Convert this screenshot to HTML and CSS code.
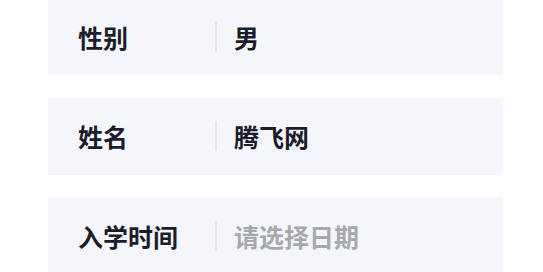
FILE: index.html
```html
<!DOCTYPE html>
<html lang="zh">
<head>
<meta charset="utf-8">
<link rel="stylesheet" href="styles.css">
</head>
<body>
<div class="form">
  <div class="row">
    <div class="label">性别</div>
    <div class="divider"></div>
    <div class="value">男</div>
  </div>
  <div class="row">
    <div class="label">姓名</div>
    <div class="divider"></div>
    <div class="value">腾飞网</div>
  </div>
  <div class="row">
    <div class="label">入学时间</div>
    <div class="divider"></div>
    <div class="value placeholder">请选择日期</div>
  </div>
</div>
</body>
</html>
```
FILE: styles.css
```css
html, body {
  margin: 0;
  padding: 0;
  background: #ffffff;
}
body {
  font-family: "Noto Sans CJK SC", "Noto Sans", sans-serif;
  overflow: hidden;
  height: 272px;
}
.form {
  display: flex;
  flex-direction: column;
  gap: 22.5px;
  width: 455px;
  margin: -2px 0 0 48px;
}
.row {
  display: flex;
  align-items: center;
  height: 77px;
  background: #f5f6fb;
  padding-left: 30px;
  box-sizing: border-box;
}
.label {
  width: 137px;
  font-size: 25px;
  font-weight: 600;
  color: #1b1c2c;
  line-height: 30px;
}
.divider {
  width: 2px;
  height: 30px;
  background: #e4e5ea;
}
.value {
  margin-left: 17px;
  font-size: 25px;
  font-weight: 600;
  color: #1b1c2c;
  line-height: 30px;
}
.value.placeholder {
  color: #a7a8ad;
}
```
